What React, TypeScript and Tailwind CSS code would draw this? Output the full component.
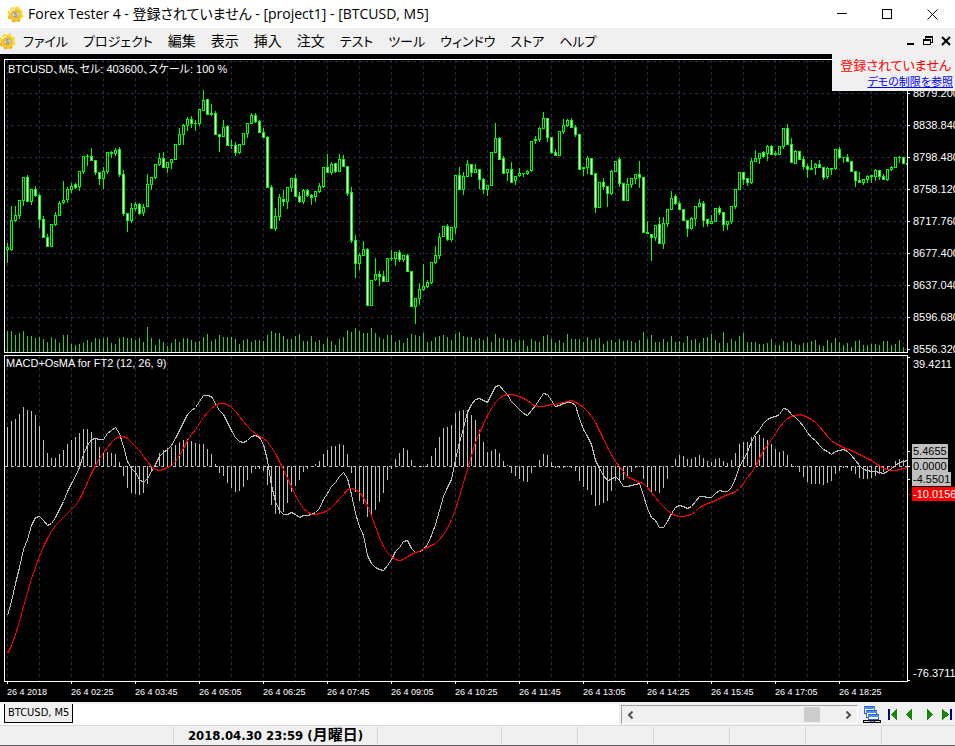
import React from "react"

// high, body top, body bottom, low, falling
const CANDLES = [
  [163,167,170,183,0],[126,140,170,171,0],[126,135,141,142,0],[120,120,136,139,0],[97,97,121,126,0],[95,97,122,122,1],
  [109,109,122,125,0],[106,109,116,117,1],[114,115,140,148,1],[136,139,158,158,1],[154,157,167,167,1],[144,144,167,167,0],
  [132,135,145,146,0],[121,123,136,136,0],[101,120,123,124,0],[107,109,120,123,0],[103,106,110,113,0],[103,104,108,109,1],
  [91,91,107,111,0],[76,76,92,94,0],[74,76,77,86,0],[68,76,81,81,1],[80,80,93,95,1],[92,92,99,105,1],
  [87,91,99,109,0],[72,72,92,94,0],[71,72,74,78,0],[68,70,74,76,0],[67,69,95,97,1],[90,94,134,136,1],
  [133,133,141,152,1],[123,128,141,143,0],[122,124,129,131,0],[123,124,134,135,1],[124,127,133,136,0],[94,104,127,127,0],
  [97,97,105,110,0],[84,84,98,99,0],[73,78,85,86,0],[72,78,88,88,1],[82,82,88,93,0],[79,79,83,89,0],
  [64,64,80,80,0],[48,54,65,65,0],[44,45,55,65,0],[37,39,46,51,0],[36,39,44,48,1],[40,43,44,51,0],
  [29,29,44,46,0],[10,20,31,31,0],[19,19,35,35,1],[24,33,35,36,0],[31,33,55,55,1],[54,54,57,72,1],
  [40,47,57,57,0],[45,46,66,66,1],[60,65,66,69,0],[62,65,73,76,1],[64,64,73,74,0],[53,53,65,65,0],
  [43,43,54,58,0],[33,35,44,44,0],[33,35,42,43,1],[40,41,53,53,1],[48,52,58,58,1],[56,57,108,108,1],
  [105,107,149,149,1],[128,136,149,151,0],[114,117,137,141,0],[110,119,122,126,1],[107,107,122,129,0],[98,98,108,112,0],
  [94,98,117,117,1],[112,116,122,123,1],[109,110,122,124,0],[109,110,116,117,1],[114,115,118,125,1],[111,111,117,122,0],
  [103,106,112,113,0],[87,87,107,108,0],[74,87,93,93,1],[82,84,93,95,0],[83,83,92,93,1],[74,79,92,92,0],
  [75,79,87,87,1],[86,86,114,116,1],[107,112,161,163,1],[155,160,184,198,1],[173,175,184,190,0],[161,169,176,176,0],
  [168,169,226,226,1],[200,200,226,226,0],[178,194,200,201,0],[191,194,197,206,1],[191,196,202,202,1],[178,178,202,202,0],
  [170,178,179,181,0],[172,172,179,186,0],[170,172,180,182,1],[175,175,180,182,0],[174,175,192,192,1],[191,191,227,227,1],
  [218,218,227,244,0],[203,209,219,225,0],[184,206,210,211,0],[200,202,207,208,0],[182,182,203,204,0],[166,175,183,184,0],
  [153,157,176,179,0],[146,146,157,157,0],[144,146,160,161,1],[147,147,160,162,0],[95,95,148,154,0],[87,95,110,110,1],
  [92,96,110,115,0],[80,84,97,97,0],[84,84,93,97,1],[84,89,93,93,0],[89,89,100,109,1],[98,99,110,114,1],
  [105,105,110,116,0],[72,72,106,106,0],[43,58,73,73,0],[57,58,80,80,1],[76,78,94,94,1],[89,89,93,101,0],
  [82,89,103,103,1],[96,96,101,105,0],[88,93,96,97,0],[93,93,94,97,0],[90,91,94,95,0],[61,61,91,92,0],
  [56,59,61,64,0],[47,48,60,62,0],[32,38,49,49,0],[38,38,58,62,1],[57,57,73,74,1],[69,72,76,76,1],
  [51,51,76,76,0],[39,45,52,54,0],[39,40,46,47,0],[38,40,48,48,1],[45,47,55,57,1],[54,54,90,90,1],
  [87,87,89,96,0],[76,78,88,94,0],[78,78,95,95,1],[93,93,128,133,1],[102,102,128,128,0],[98,102,107,110,1],
  [106,106,114,127,1],[90,91,114,115,0],[81,81,92,92,0],[77,79,104,107,1],[103,103,121,121,1],[98,104,121,121,0],
  [98,98,105,108,0],[94,94,99,104,0],[81,94,98,108,1],[97,97,153,153,1],[141,152,154,154,0],[154,154,158,181,1],
  [145,145,158,161,0],[137,144,164,164,1],[137,143,164,169,0],[129,129,144,147,0],[111,118,130,130,0],[114,116,124,125,1],
  [121,123,130,130,1],[129,129,141,141,1],[140,140,149,157,1],[137,138,149,150,0],[126,126,139,146,0],[119,123,127,127,0],
  [121,123,141,147,1],[139,139,144,147,1],[135,141,144,144,0],[128,128,142,142,0],[126,128,133,135,1],[132,132,145,151,1],
  [141,141,145,150,0],[126,126,142,144,0],[109,109,127,129,0],[92,92,110,110,0],[92,92,100,105,1],[98,98,103,106,1],
  [78,81,103,104,0],[70,78,82,82,0],[73,73,79,84,0],[71,72,77,78,1],[65,66,74,81,0],[65,66,75,75,1],
  [71,73,75,76,0],[66,66,75,75,0],[48,48,67,69,0],[44,48,65,65,1],[58,64,83,83,1],[70,71,84,84,0],
  [71,71,80,80,1],[76,79,87,90,1],[84,86,90,98,1],[80,88,90,90,0],[83,84,88,95,0],[80,84,88,88,1],
  [87,87,98,100,1],[87,88,97,99,0],[88,88,90,95,0],[69,69,89,90,0],[67,69,78,79,1],[77,77,78,83,0],
  [74,77,82,82,1],[81,81,92,92,1],[91,91,101,107,1],[92,100,103,103,1],[99,99,103,105,0],[95,96,100,103,0],
  [95,95,97,103,0],[89,90,97,101,0],[90,90,97,100,1],[94,96,100,100,1],[89,89,100,101,0],[86,87,90,91,0],
  [77,77,88,88,0],[76,77,78,83,0],[77,77,84,84,1],[83,83,85,85,0],
]

const VOLUME = [
  21,21,17,19,21,16,16,14,15,13,10,15,13,9,17,17,8,7,8,9,12,10,14,13,14,15,9,8,14,15,14,14,12,14,10,25,14,7,13,10,
  6,9,13,10,14,14,12,10,11,15,18,11,13,17,15,15,15,13,8,12,13,10,12,12,11,17,21,19,19,16,13,13,16,18,11,11,16,10,12,8,
  14,11,7,13,15,22,20,24,21,19,19,24,19,15,13,17,17,10,12,9,14,18,17,16,19,10,11,15,16,17,15,12,18,20,16,15,
  15,12,14,12,15,10,18,14,14,12,13,10,12,12,6,13,11,10,16,17,13,9,12,9,18,13,13,13,10,15,12,13,14,8,11,12,10,13,11,12,
  11,9,12,20,13,17,10,10,13,10,16,10,11,9,16,12,13,9,14,15,18,12,9,20,9,13,11,16,19,10,10,10,8,8,9,13,7,7,
  11,9,11,8,7,9,9,11,12,7,6,12,9,14,10,7,9,5,11,12,7,7,8,8,7,11,11,7,8,12,5,
]

const HISTOGRAM = [
  39,45,47,52,59,56,55,51,40,26,13,8,8,12,16,22,26,29,33,37,37,34,28,19,14,14,13,12,4,-9,-21,-26,-27,-28,-26,-17,-5,2,13,16,
  18,19,21,24,26,27,25,23,22,22,17,12,2,-6,-9,-16,-21,-25,-24,-20,-13,-6,-2,-2,-4,-18,-38,-47,-47,-45,-36,-25,-19,-13,-5,-2,0,2,5,
  12,16,20,20,22,21,12,-6,-25,-34,-37,-50,-50,-43,-35,-26,-13,-2,7,13,18,16,6,0,0,0,2,10,18,29,38,39,41,53,55,56,56,51,46,36,
  24,14,15,17,13,5,1,-6,-9,-12,-14,-15,-6,0,6,12,11,4,-1,-1,-1,0,-1,-4,-14,-20,-23,-28,-39,-38,-36,-34,-24,-14,-13,-13,-9,
  -5,-1,0,-12,-20,-25,-24,-26,-21,-12,0,7,11,10,7,7,9,11,8,5,4,7,8,5,3,6,13,22,24,24,29,30,31,28,26,22,17,14,15,11,
  2,0,-5,-10,-15,-17,-17,-17,-18,-16,-14,-7,-4,-1,-1,-4,-7,-11,-12,-12,-11,-9,-7,-5,-3,0,5,7,6,6,
]

const MACD = [
  615,601,583,567,549,539,525,517,516,520,525,523,517,509,501,491,483,476,467,454,445,439,438,439,439,433,430,427,433,446,
  461,468,472,479,482,478,471,464,456,452,449,445,438,430,422,414,410,407,401,395,395,396,403,410,414,422,430,437,441,442,
  440,436,435,437,444,460,485,501,510,514,514,512,514,517,515,515,514,512,508,
  499,493,486,482,476,472,478,494,513,526,535,555,563,567,569,570,565,559,551,547,541,540,548,552,551,549,544,535,524,510,
  496,487,479,459,442,428,412,404,399,398,400,402,394,386,385,390,394,401,405,409,413,415,410,405,399,393,394,400,406,405,
  403,402,402,405,418,429,436,444,460,468,475,480,479,476,480,486,486,
  485,484,483,495,508,517,520,527,527,521,513,507,505,506,508,506,501,496,496,497,497,493,490,491,491,487,478,466,459,452,
  441,434,429,423,419,417,416,414,408,409,414,417,421,426,432,437,440,445,449,451,454,451,450,449,451,455,460,465,469,470,
  471,471,472,473,471,468,465,462,461,460,
]

const SIGNAL = [
  653,645,634,621,606,592,578,567,556,546,538,531,525,521,517,513,509,505,499,491,482,473,465,458,452,447,442,438,436,436,
  438,442,446,450,456,461,466,469,470,469,467,465,461,455,448,440,434,429,423,417,412,408,405,403,403,404,407,411,416,421,
  426,430,433,436,438,441,447,453,461,469,478,486,495,502,508,511,514,514,513,
  512,510,507,503,498,494,489,488,489,492,497,505,515,526,537,546,552,556,559,560,559,556,554,552,551,548,547,545,543,539,
  534,528,519,509,496,482,469,455,442,432,424,415,408,402,398,395,394,394,395,396,398,400,403,406,406,406,405,404,404,403,
  402,401,400,402,404,407,411,416,422,430,438,447,454,461,466,471,477,
  478,480,482,483,487,492,497,502,506,510,513,515,516,516,515,514,511,507,505,503,502,500,498,496,494,493,491,488,483,477,
  472,466,458,450,445,439,433,427,422,418,416,415,414,415,417,419,422,426,431,436,440,443,445,447,449,450,452,454,456,458,
  460,463,465,468,469,470,470,469,468,467,
]

const MENU = ["ファイル", "プロジェクト", "編集", "表示", "挿入", "注文", "テスト", "ツール", "ウィンドウ", "ストア", "ヘルプ"]

const PRICES = ["8879.200", "8838.840", "8798.480", "8758.120", "8717.760", "8677.400", "8637.040", "8596.680", "8556.320"]

const TIMES = [
  "26 4 2018", "26 4 02:25", "26 4 03:45", "26 4 05:05", "26 4 06:25", "26 4 07:45", "26 4 09:05",
  "26 4 10:25", "26 4 11:45", "26 4 13:05", "26 4 14:25", "26 4 15:45", "26 4 17:05", "26 4 18:25",
]

const range = (n: number) => Array.from({ length: n }, (_, i) => i)
const barX = (i: number) => 7 + i * 4
const box = (x: number, y: number, w: number, h: number) => `M${x} ${y}h${w}v${h}h${-w}z`
const line = (ys: number[]) => ys.map((y, i) => `${barX(i) + 0.5},${y + 0.5}`).join(" ")

function CoinIcon() {
  return (
    <svg width="17" height="17" viewBox="0 0 17 17" className="shrink-0" aria-hidden="true">
      {range(8).map((i) => (
        <circle
          key={i}
          cx={8.5 + 5.8 * Math.cos((i * Math.PI) / 4 + 0.3)}
          cy={8.5 + 5.8 * Math.sin((i * Math.PI) / 4 + 0.3)}
          r="2.4"
          fill={i > 0 && i < 4 ? "#eeb81c" : "#fbdc3c"}
        />
      ))}
      <circle cx="8.5" cy="8.5" r="6" fill="#f9cc2c" />
      <circle cx="8.5" cy="8.5" r="3.7" fill="#e4e0cc" stroke="#d9a520" />
      <path d="M3.6 6.4A5.4 5.4 0 0 1 8 3" fill="none" stroke="#fff8c4" strokeWidth="1.2" />
      <text x="8.5" y="11" textAnchor="middle" fontSize="7" fontWeight="700" fill="#8c8c80" fontFamily="Liberation Sans, sans-serif">$</text>
    </svg>
  )
}

function TitleBar() {
  return (
    <header className="flex h-7 items-center bg-white pl-[7px]">
      <CoinIcon />
      <h1 className="ml-1 flex-1 truncate text-[14px] leading-6 font-normal">
        Forex Tester 4 - 登録されていません - [project1] - [BTCUSD, M5]
      </h1>
      <div className="flex h-full">
        <button aria-label="最小化" className="flex w-[45px] items-center justify-center">
          <svg width="11" height="11" shapeRendering="crispEdges"><path d="M0 4h10v1H0z" /></svg>
        </button>
        <button aria-label="最大化" className="flex w-[45px] items-center justify-center">
          <svg width="11" height="11" shapeRendering="crispEdges"><rect x=".5" y=".5" width="9" height="9" fill="none" stroke="#000" /></svg>
        </button>
        <button aria-label="閉じる" className="flex w-[45px] items-center justify-center">
          <svg width="11" height="11"><path d="M.5 .5l10 10M10.5 .5l-10 10" stroke="#000" /></svg>
        </button>
      </div>
    </header>
  )
}

function MenuBar() {
  return (
    <nav className="flex h-[26px] items-center bg-[#f0f0f0]">
      <div className="-ml-px"><CoinIcon /></div>
      <div className="ml-[7px] flex flex-1 gap-[15px] leading-6">
        {MENU.map((item) => (
          <button key={item} className={item.length === 2 ? "text-[14px] whitespace-nowrap" : "text-[13px] whitespace-nowrap"}>
            {item}
          </button>
        ))}
      </div>
      <button aria-label="子ウィンドウを最小化" className="flex w-[18px] justify-center">
        <svg width="10" height="10" shapeRendering="crispEdges"><path d="M2 7h7v2H2z" /></svg>
      </button>
      <button aria-label="元に戻す" className="flex w-[18px] justify-center">
        <svg width="10" height="10" shapeRendering="crispEdges">
          <path d="M2 0h8v7H8V6h1V2H3v1H2zM0 3h8v6H0zM1 5v3h6V5z" fillRule="evenodd" />
        </svg>
      </button>
      <button aria-label="子ウィンドウを閉じる" className="flex w-[18px] justify-center">
        <svg width="10" height="10"><path d="M1 1l8 8M9 1l-8 8" stroke="#000" strokeWidth="2" /></svg>
      </button>
    </nav>
  )
}

function Plot() {
  const green = CANDLES.map(([high, top, bottom, low], i) => {
    const x = barX(i)
    return box(x, 80 + high, 1, low - high) + box(x - 1, 80 + top, i === 225 ? 2 : 3, bottom - top)
  }).join("")
  const inner = (falling: number) =>
    CANDLES.map(([, top, bottom, , f], i) =>
      f === falling && bottom - top > 2 ? box(barX(i), 81 + top, 1, bottom - top - 2) : ""
    ).join("")

  return (
    <svg viewBox="4 59 906 625" preserveAspectRatio="none" className="block h-[625px] w-full" shapeRendering="crispEdges" role="img" aria-label="BTCUSD M5">
      {/* grid */}
      <g stroke="#2a2a45" strokeDasharray="3 3">
        {range(29).map((i) => (
          <path key={i} d={`M${7.5 + i * 32} 60V352M${7.5 + i * 32} 356V681`} />
        ))}
        {range(10).map((i) => (
          <path key={i} d={`M5 ${61.5 + i * 32}H907`} />
        ))}
      </g>

      {/* volume and candles */}
      <path fill="#32cd32" d={VOLUME.map((v, i) => box(barX(i), 352 - v, 1, v)).join("")} />
      <path fill="#00ff00" d={green} />
      <path fill="#000" d={inner(0)} />
      <path fill="#fff" d={inner(1)} />

      {/* oscillator */}
      <path d="M5 466.5H907" stroke="#c0c0c0" strokeDasharray="3 3" />
      <path
        fill="#c0c0c0"
        d={HISTOGRAM.map((v, i) => (v > 0 ? box(barX(i), 466 - v, 1, v) : box(barX(i), 466, 1, 1 - v))).join("")}
      />
      <polyline points={line(MACD)} fill="none" stroke="#c0c0c0" />
      <polyline points={line(SIGNAL)} fill="none" stroke="#f00" />

      {/* frames and ticks */}
      <g fill="none" stroke="#fff">
        <path d="M908 59.5H4.5V352.5H907.5V59M908 355.5H4.5V681.5H907.5V355" />
        {range(9).map((i) => (
          <path key={i} d={`M908 ${93.5 + i * 32}h2`} />
        ))}
        {range(14).map((i) => (
          <path key={i} d={`M${7.5 + i * 64} 682v2`} />
        ))}
        <path d="M908 357.5h2M908 451.5h2M908 466.5h2M908 479.5h2M908 680.5h2" />
        <path d="M908 494.5h2" stroke="#f00" />
      </g>
    </svg>
  )
}

function Chart() {
  return (
    <main className="relative flex h-[648px] overflow-hidden bg-black pt-[5px] pl-1 font-['Liberation_Sans','Noto_Sans_CJK_JP',sans-serif] text-[11px] text-white">
      <div className="flex min-w-0 flex-1 flex-col">
        <Plot />
        <div className="flex pt-px pr-[7px] pl-[3px] text-[9px] leading-[14px]">
          {TIMES.map((time) => (
            <span key={time} className="min-w-0 flex-1 whitespace-nowrap">{time}</span>
          ))}
        </div>
      </div>

      <aside className="w-[45px] shrink-0 whitespace-nowrap">
        <ul className="h-[296px] pt-[18px] pl-[3px] leading-8">
          {PRICES.map((price) => (
            <li key={price} className="h-8">{price}</li>
          ))}
        </ul>
        <div className="flex flex-col items-start pt-[2px] pl-[2px] leading-[14px]">
          <span className="px-px">39.4211</span>
          <span className="mt-[73px] bg-[#c0c0c0] px-px text-black">5.4655</span>
          <span className="mt-px bg-[#c0c0c0] px-px text-black">0.0000</span>
          <span className="-mt-px bg-[#c0c0c0] px-px text-black">-4.5501</span>
          <span className="mt-px bg-[#ff0000] px-px">-10.0156</span>
          <span className="mt-[165px] px-px">-76.3711</span>
        </div>
      </aside>

      <p className="absolute top-2 left-2 leading-[14px] [font-feature-settings:'palt']">
        BTCUSD、M5、セル: 403600、スケール: 100 %
      </p>
      <p className="absolute top-[302px] left-[6px] leading-[14px]">MACD+OsMA for FT2 (12, 26, 9)</p>

      <div className="absolute top-0 right-0 h-[37px] w-[123px] overflow-hidden bg-[#f0f0f0] text-right whitespace-nowrap [font-feature-settings:'palt']">
        <p className="pt-1 pr-1 text-[13px] leading-4 text-[#ff0000]">登録されていません</p>
        <a href="#limits" className="block pr-[2px] text-[11px] leading-[17px] text-[#0000ff] underline">デモの制限を参照</a>
      </div>
    </main>
  )
}

function NavButton({ label, d, bar }: { label: string; d: string; bar?: number }) {
  return (
    <button aria-label={label}>
      <svg width="10" height="12" shapeRendering="crispEdges">
        <path d={d} fill="#128a00" />
        {bar !== undefined && <rect x={bar} width="2" height="11" fill="#000080" />}
      </svg>
    </button>
  )
}

function TabRow() {
  return (
    <div className="flex h-[23px] border-t-2 border-[#f0f0f0] bg-[#f0f0f0]">
      <div className="flex flex-1 items-start bg-white pl-1">
        <button className="h-[19px] border border-t-0 border-black bg-[#f0f0f0] px-[3px] font-['DejaVu_Sans_Condensed','DejaVu_Sans',sans-serif] text-[11px] leading-[18px]">
          BTCUSD, M5
        </button>
      </div>
      <div
        role="scrollbar"
        aria-controls="root"
        aria-valuenow={88}
        className="mt-px ml-[2px] flex h-[19px] w-[237px] border border-t-[#a0a0a0] border-r-white border-b-white border-l-[#a0a0a0]"
      >
        <button aria-label="左へ" className="flex w-[17px] items-center justify-center">
          <svg width="7" height="8"><path d="M5.5 .5L2 4l3.5 3.5" fill="none" stroke="#505050" strokeWidth="2" /></svg>
        </button>
        <div className="flex flex-1 justify-end bg-[#f0f0f0] py-px pr-5">
          <div className="w-4 bg-[#cdcdcd]" />
        </div>
        <button aria-label="右へ" className="flex w-[17px] items-center justify-center">
          <svg width="7" height="8"><path d="M1.5 .5L5 4 1.5 7.5" fill="none" stroke="#505050" strokeWidth="2" /></svg>
        </button>
      </div>
      <div className="flex items-center pr-[3px] pl-[5px]">
        <button aria-label="ウィンドウ一覧">
          <svg width="18" height="18" shapeRendering="crispEdges">
            <g fill="#fff" stroke="#2a62c4">
              <rect x="1.5" y=".5" width="10" height="7" />
              <rect x="3.5" y="4.5" width="10" height="7" />
              <rect x="5.5" y="8.5" width="10" height="5" />
            </g>
            <path d="M1 1h11v2H1zM3 5h11v2H3zM5 9h11v2H5z" fill="#4f8fe6" />
            <path d="M0 14h18v3H0z" />
            <path d="M1 15h6v1H1zM12 15h5v1h-5z" fill="#ddd" />
            <path d="M8 15h3v1H8z" fill="#5aa0e8" />
          </svg>
        </button>
        <div className="ml-[7px] flex gap-2">
          <NavButton label="最初" d="M9 0v11L3 6V5z" bar={0} />
          <NavButton label="前" d="M6 0v11L0 6V5z" />
          <NavButton label="次" d="M3 0v11l6-5V5z" />
          <NavButton label="最後" d="M0 0v11l7-5V5z" bar={8} />
        </div>
      </div>
    </div>
  )
}

function StatusBar() {
  return (
    <footer className="flex h-[21px] border-t border-b border-t-[#d7d7d7] border-b-[#666] bg-[#f0f0f0] py-px">
      <div className="w-[174px] shrink-0 border-r border-[#d7d7d7]" />
      <div className="flex w-[204px] shrink-0 items-center justify-center border-r border-[#d7d7d7] font-['DejaVu_Sans_Condensed','DejaVu_Sans','Noto_Sans_CJK_JP',sans-serif] text-[13px] leading-[17px] font-bold whitespace-pre">
        2018.04.30 23:59 (<span className="text-[15px]">月曜日</span>)
      </div>
      <div className="flex-1 border-r border-[#d7d7d7]" />
      {range(5).map((i) => (
        <div key={i} className="w-[76px] border-r border-[#d7d7d7]" />
      ))}
      <div className="w-[73px]" />
    </footer>
  )
}

export default function App() {
  return (
    <div className="flex flex-col overflow-hidden bg-[#f0f0f0] font-['Open_Sans','Noto_Sans_CJK_JP',sans-serif] text-black">
      <div className="[font-feature-settings:'palt']">
        <TitleBar />
        <MenuBar />
      </div>
      <Chart />
      <TabRow />
      <StatusBar />
    </div>
  )
}
